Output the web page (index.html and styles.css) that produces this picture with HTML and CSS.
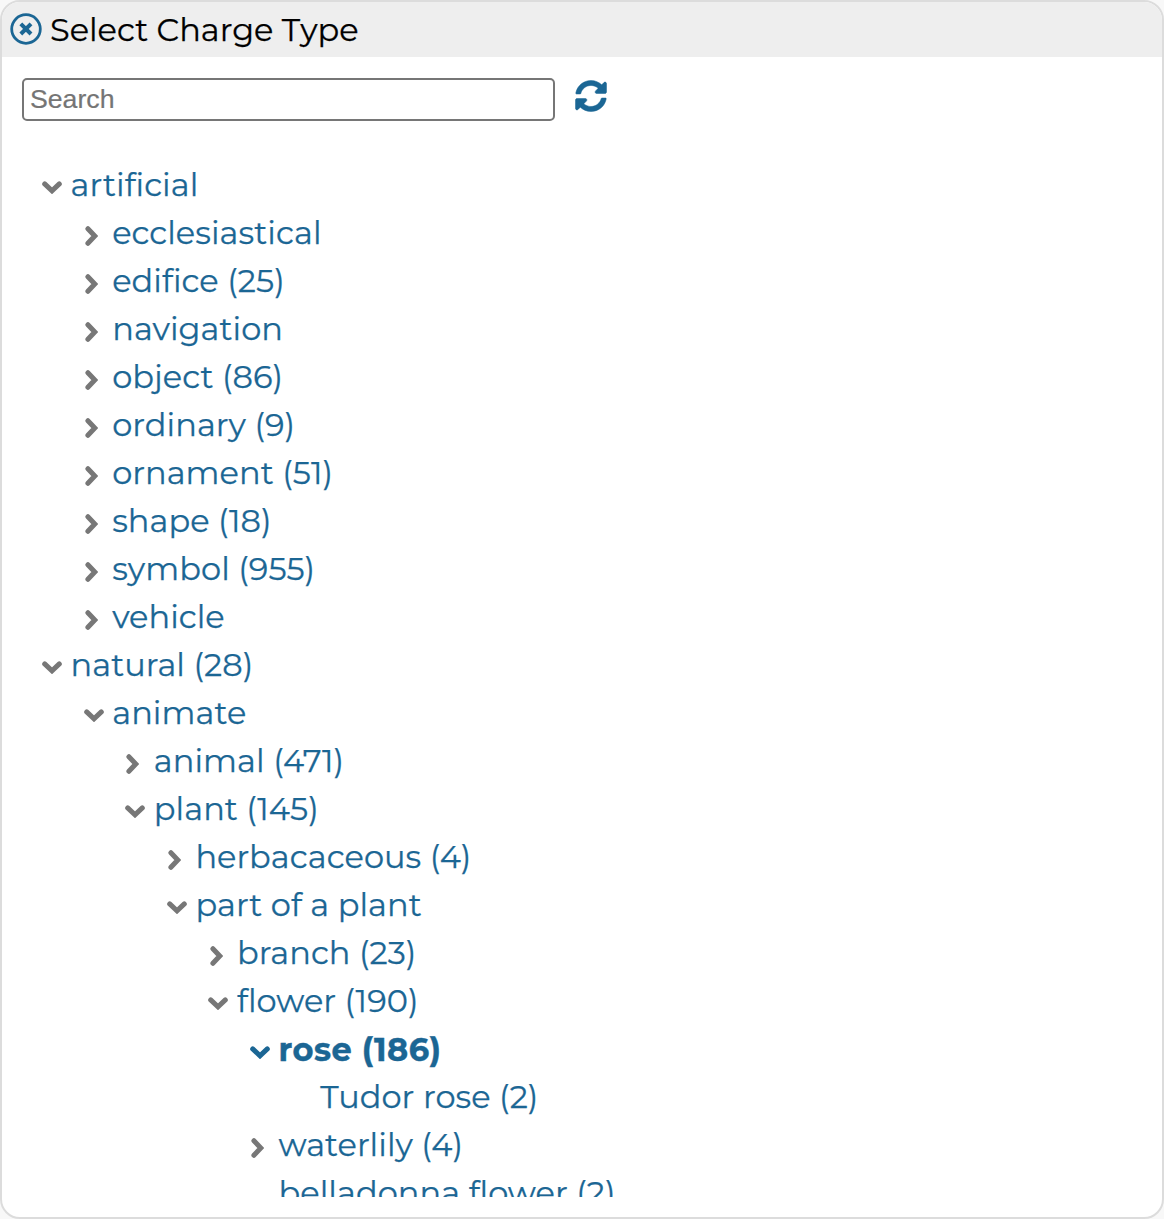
FILE: index.html
```
<!DOCTYPE html>
<html lang="en">
<head>
<meta charset="utf-8">
<title>Select Charge Type</title>
<link rel="stylesheet" href="styles.css">
</head>
<body>
<svg class="defs" aria-hidden="true">
  <symbol id="down" viewBox="0 0 20 13"><path d="M2.7 2.9 10 9.8 17.3 2.9"/></symbol>
  <symbol id="right" viewBox="0 0 13 20"><path d="M2.9 2.7 9.8 10 2.9 17.3"/></symbol>
</svg>
<main class="dialog">
  <header class="titlebar">
    <svg class="close" viewBox="0 0 32 32"><circle cx="16" cy="16" r="14.3"/><path d="m10.8 10.8 10.2 10.2m0-10.2-10.2 10.2"/></svg>
    <h1>Select Charge Type</h1>
  </header>
  <div class="toolbar">
    <input class="search" type="text" placeholder="Search">
    <svg class="refresh" viewBox="0 0 512 512"><path d="M370.72 133.28C339.458 104.008 298.888 87.962 255.848 88c-77.458.068-144.328 53.178-162.791 126.85-1.344 5.363-6.122 9.15-11.651 9.15H24.103c-7.498 0-13.194-6.807-11.807-14.176C33.933 94.924 134.813 8 256 8c66.448 0 126.791 26.136 171.315 68.685L463.03 40.97C478.149 25.851 504 36.559 504 57.941V192c0 13.255-10.745 24-24 24H345.941c-21.382 0-32.09-25.851-16.971-40.971l41.75-41.749zM32 296h134.059c21.382 0 32.09 25.851 16.971 40.971l-41.75 41.75c31.262 29.273 71.835 45.319 114.876 45.28 77.418-.07 144.315-53.144 162.787-126.849 1.344-5.363 6.122-9.15 11.651-9.15h57.304c7.498 0 13.194 6.807 11.807 14.176C478.067 417.076 377.187 504 256 504c-66.448 0-126.791-26.136-171.315-68.685L48.97 471.03C33.851 486.149 8 475.441 8 454.059V320c0-13.255 10.745-24 24-24z"/></svg>
  </div>
  <div class="scroller">
    <ul class="tree">
      <li><a class="node"><svg class="down"><use href="#down"/></svg>artificial</a>
        <ul>
          <li><a class="node"><svg class="right"><use href="#right"/></svg>ecclesiastical</a></li>
          <li><a class="node"><svg class="right"><use href="#right"/></svg>edifice (25)</a></li>
          <li><a class="node"><svg class="right"><use href="#right"/></svg>navigation</a></li>
          <li><a class="node"><svg class="right"><use href="#right"/></svg>object (86)</a></li>
          <li><a class="node"><svg class="right"><use href="#right"/></svg>ordinary (9)</a></li>
          <li><a class="node"><svg class="right"><use href="#right"/></svg>ornament (51)</a></li>
          <li><a class="node"><svg class="right"><use href="#right"/></svg>shape (18)</a></li>
          <li><a class="node"><svg class="right"><use href="#right"/></svg>symbol (955)</a></li>
          <li><a class="node"><svg class="right"><use href="#right"/></svg>vehicle</a></li>
        </ul>
      </li>
      <li><a class="node"><svg class="down"><use href="#down"/></svg>natural (28)</a>
        <ul>
          <li><a class="node"><svg class="down"><use href="#down"/></svg>animate</a>
            <ul>
              <li><a class="node"><svg class="right"><use href="#right"/></svg>animal (471)</a></li>
              <li><a class="node"><svg class="down"><use href="#down"/></svg>plant (145)</a>
                <ul>
                  <li><a class="node"><svg class="right"><use href="#right"/></svg>herbacaceous (4)</a></li>
                  <li><a class="node"><svg class="down"><use href="#down"/></svg>part of a plant</a>
                    <ul>
                      <li><a class="node"><svg class="right"><use href="#right"/></svg>branch (23)</a></li>
                      <li><a class="node"><svg class="down"><use href="#down"/></svg>flower (190)</a>
                        <ul>
                          <li><a class="node selected"><svg class="down"><use href="#down"/></svg>rose (186)</a>
                            <ul>
                              <li><a class="node">Tudor rose (2)</a></li>
                            </ul>
                          </li>
                          <li><a class="node"><svg class="right"><use href="#right"/></svg>waterlily (4)</a></li>
                          <li><a class="node">belladonna flower (2)</a></li>
                        </ul>
                      </li>
                    </ul>
                  </li>
                </ul>
              </li>
            </ul>
          </li>
        </ul>
      </li>
    </ul>
  </div>
</main>
</body>
</html>
```
FILE: styles.css
```
* { box-sizing: border-box; }
body {
  margin: 0;
  background: #f8f8f8;
  font: 400 32px/48px Montserrat, Inter, sans-serif;
}
.defs { display: none; }
.dialog {
  display: flex;
  flex-direction: column;
  height: 1219px;
  padding-bottom: 20px;
  overflow: hidden;
  border: 2px solid #dcdcdc;
  border-radius: 20px;
  background: #fff;
}
.titlebar {
  display: flex;
  align-items: center;
  gap: 8px;
  height: 55px;
  padding: 0 8px 1px;
  background: #eee;
}
.titlebar h1 { margin: 0; padding-top: 2px; font-size: 32px; font-weight: 400; -webkit-text-stroke: 0.25px; }
.close { width: 32px; height: 32px; fill: none; stroke: #1b6694; stroke-width: 2.8; }
.close path { stroke-width: 4; stroke-linecap: butt; }
.toolbar { display: flex; gap: 20px; padding: 21px 20px 0; height: 104px; }
.search {
  width: 533px;
  height: 43px;
  padding: 0 6px 1px;
  border: 2px solid #767676;
  border-radius: 5px;
  background: #fff;
  font: 26.67px "Liberation Sans", Arial, sans-serif;
}
.search::placeholder { color: #757575; -webkit-text-stroke: 0.2px; }
.refresh { width: 32px; height: 32px; margin-top: 2px; fill: #1b6694; stroke: #1b6694; stroke-width: 8; }
.scroller { flex: 1; overflow: hidden; padding-left: 27px; }
.tree ul, .tree { margin: 0; padding: 0; list-style: none; }
.tree li { padding-left: 41.6px; }
.node {
  display: flex;
  align-items: center;
  height: 48px;
  white-space: nowrap;
  color: #1b6694;
  letter-spacing: 0.06px;
  -webkit-text-stroke: 0.25px;
}
.node svg {
  flex: none;
  margin-top: 5px;
  fill: none;
  stroke: #777;
  stroke-width: 5;
  stroke-linecap: round;
}
.down { width: 20px; height: 13px; margin-left: -28.6px; margin-right: 8.6px; }
.right { width: 13px; height: 20px; margin-left: -27.4px; margin-right: 14.4px; }
.node .right { margin-top: 6px; }
.node.selected { padding-top: 2px; font-weight: 700; letter-spacing: 0.5px; -webkit-text-stroke: 0.4px; }
.node.selected svg { stroke: #1b6694; }
```
